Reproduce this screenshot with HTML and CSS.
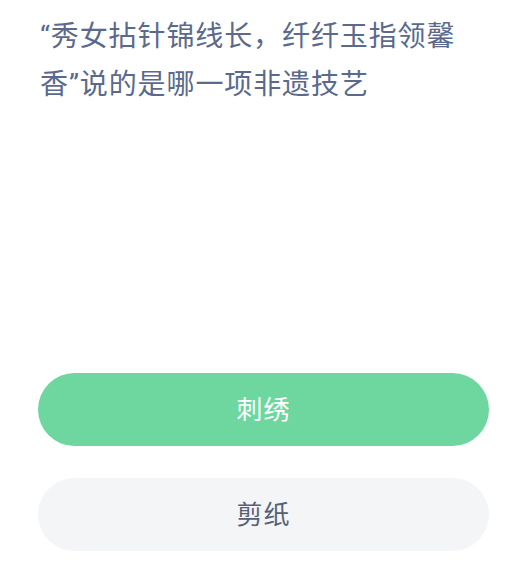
FILE: index.html
```html
<!DOCTYPE html>
<html lang="zh-CN">
<head>
    <meta charset="UTF-8">
    <meta name="viewport" content="width=device-width, initial-scale=1.0">
    <title>答题</title>
    <link rel="stylesheet" href="styles.css">
</head>
<body>
    <div class="quiz">
        <h1 class="question">“秀女拈针锦线长，纤纤玉指领馨香”说的是哪一项非遗技艺</h1>

        <div class="options">
            <button class="option option-active">刺绣</button>
            <button class="option">剪纸</button>
        </div>
    </div>
</body>
</html>
```

FILE: styles.css
```css
* {
    margin: 0;
    padding: 0;
    box-sizing: border-box;
}

body {
    font-family: Roboto, "Noto Sans CJK SC", sans-serif;
    background: #fff;
    width: 508px;
    height: 577px;
    overflow: hidden;
}

.quiz {
    display: flex;
    flex-direction: column;
    padding: 13px 19px 0 38px;
}

.question {
    font-size: 28px;
    font-weight: normal;
    line-height: 48px;
    letter-spacing: 0.9px;
    color: #5a698c;
    padding: 0 19px 0 2px;
}

.options {
    display: flex;
    flex-direction: column;
    gap: 32px;
    margin-top: 264px;
}

.option {
    height: 73px;
    border: none;
    border-radius: 37px;
    background-color: #f3f5f7;
    color: #566076;
    font-family: Roboto, "Noto Sans CJK SC", sans-serif;
    font-size: 26px;
    letter-spacing: 1px;
    padding-bottom: 4px;
}

.option-active {
    background-color: #6dd79f;
    color: #fff;
}
```
